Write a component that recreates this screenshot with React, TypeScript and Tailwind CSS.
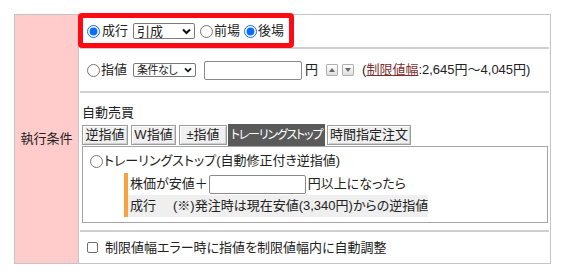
import React from 'react';

function Radio({ checked }: { checked?: boolean }) {
  return (
    <input
      type="radio"
      readOnly
      checked={!!checked}
      className="w-[13px] h-[13px] shrink-0 accent-[#0a6cff]"
    />
  );
}

function FakeSelect({ label, className, small }: { label: string; className: string; small?: boolean }) {
  return (
    <div
      className={`flex items-center justify-between border border-[#7a7a7a] rounded-[2px] bg-white pl-[3px] pr-[3px] ${className}`}
    >
      <span className={small ? 'text-[11px] leading-none tracking-[-0.5px]' : 'text-[13px] leading-none'}>{label}</span>
      <svg width={small ? 8 : 9} height={small ? 6 : 7} viewBox="0 0 9 7">
        <path d="M1 1.5 L4.5 5 L8 1.5" fill="none" stroke="#111" strokeWidth="2" />
      </svg>
    </div>
  );
}

function Spin({ up }: { up?: boolean }) {
  return (
    <div className="w-[12px] h-[12px] flex items-center justify-center border border-[#b0b0b0] rounded-[1px] bg-gradient-to-b from-white to-[#dedede]">
      <svg width="6" height="4" viewBox="0 0 6 4">
        <path d={up ? 'M0 4 L3 0 L6 4 Z' : 'M0 0 L3 4 L6 0 Z'} fill="#666" />
      </svg>
    </div>
  );
}

function LightTab({ label, className }: { label: string; className: string }) {
  return (
    <div
      className={`h-[20px] flex items-center justify-center border border-[#9c9c9c] bg-[#f0f0f0] shadow-[inset_1px_1px_0_#ffffff,inset_-1px_-1px_0_#d0d0d0] text-[13px] whitespace-nowrap ${className}`}
    >
      {label}
    </div>
  );
}

export default function App() {
  return (
    <div className="w-[567px] h-[280px] bg-white pt-[14px] pl-[14px] font-['Liberation_Sans','Noto_Sans_CJK_JP',sans-serif] text-[13px] leading-[16px] text-[#222] [font-feature-settings:'palt']">
      <div className="relative flex w-[537px] h-[250px] border border-[#c4c4c4]">
        <div className="w-[64px] shrink-0 bg-[#ffcbcb] border-r border-[#c4c4c4] flex items-center justify-center">
          執行条件
        </div>

        <div className="flex-1 flex flex-col px-[1px]">
          {/* row 1 */}
          <div className="h-[34px] shrink-0 border-b-2 border-[#cfcfcf] flex items-center pl-[7px]">
            <Radio checked />
            <span className="ml-[2px]">成行</span>
            <FakeSelect label="引成" className="ml-[5px] w-[62px] h-[16px]" />
            <span className="ml-[5px] flex items-center">
              <Radio />
              <span className="ml-[1px]">前場</span>
            </span>
            <span className="ml-[4px] flex items-center">
              <Radio checked />
              <span className="ml-[1px]">後場</span>
            </span>
          </div>

          {/* row 2 */}
          <div className="h-[44px] shrink-0 border-b-2 border-[#cfcfcf] flex items-center pl-[7px]">
            <Radio />
            <span className="ml-[1px]">指値</span>
            <FakeSelect label="条件なし" small className="ml-[6px] w-[63px] h-[14px]" />
            <div className="ml-[8px] w-[98px] h-[19px] border border-[#8a8a8a] rounded-[2px] bg-white" />
            <span className="ml-[3px]">円</span>
            <div className="ml-[8px] flex gap-[4px]">
              <Spin up />
              <Spin />
            </div>
            <span className="ml-[8px] whitespace-nowrap">
              (<span className="text-[#7d2f2f] underline">制限値幅</span>:2,645円～4,045円)
            </span>
          </div>

          {/* row 3 */}
          <div className="h-[139px] shrink-0 border-b-2 border-[#cfcfcf] pl-[2px] pr-[1px] pt-[12px] flex flex-col">
            <div>自動売買</div>
            <div className="mt-[4px] h-[21px] flex items-end">
              <LightTab label="逆指値" className="w-[46px] mb-[1px]" />
              <LightTab label="W指値" className="ml-[3px] w-[45px] mb-[1px]" />
              <LightTab label="±指値" className="ml-[3px] w-[48px] mb-[1px]" />
              <div className="ml-[1px] w-[97px] h-[22px] shrink-0 bg-[#5a5a5a] text-white text-[12px] tracking-[-1.2px] whitespace-nowrap flex items-center justify-center">
                トレーリングストップ
              </div>
              <LightTab label="時間指定注文" className="ml-[2px] w-[84px] mb-[1px]" />
            </div>
            <div className="h-[77px] border border-[#a4a4a4] pl-[7px] pt-[6px] pb-[5px]">
              <div className="flex items-center h-[16px]">
                <Radio />
                <span className="ml-[1px]">トレーリングストップ(自動修正付き逆指値)</span>
              </div>
              <div className="mt-[4px] ml-[34px] w-[298px] flex">
                <div className="w-[4px] shrink-0 self-stretch bg-[#f7a23e]" />
                <div className="flex-1 flex flex-col">
                  <div className="h-[22px] flex items-center pl-[2px] bg-white">
                    <span>株価が安値＋</span>
                    <div className="ml-[1px] w-[97px] h-[19px] border border-[#8a8a8a] rounded-[2px] bg-white" />
                    <span className="ml-[2px]">円以上になったら</span>
                  </div>
                  <div className="h-[22px] flex items-center pl-[2px] bg-[#efefef] whitespace-nowrap">
                    <span className="w-[43px]">成行</span>
                    <span>(※)発注時は現在安値(3,340円)からの逆指値</span>
                  </div>
                </div>
              </div>
            </div>
          </div>

          {/* row 4 */}
          <div className="flex-1 flex items-center pl-[7px]">
            <div className="w-[11px] h-[11px] border border-[#6e6e6e] rounded-[2px] bg-white" />
            <span className="ml-[7px]">制限値幅エラー時に指値を制限値幅内に自動調整</span>
          </div>
        </div>

        <div className="absolute left-[63px] top-[-2px] w-[216px] h-[35px] border-[5px] border-[#ff0a14] rounded-[4px]" />
      </div>
    </div>
  );
}
